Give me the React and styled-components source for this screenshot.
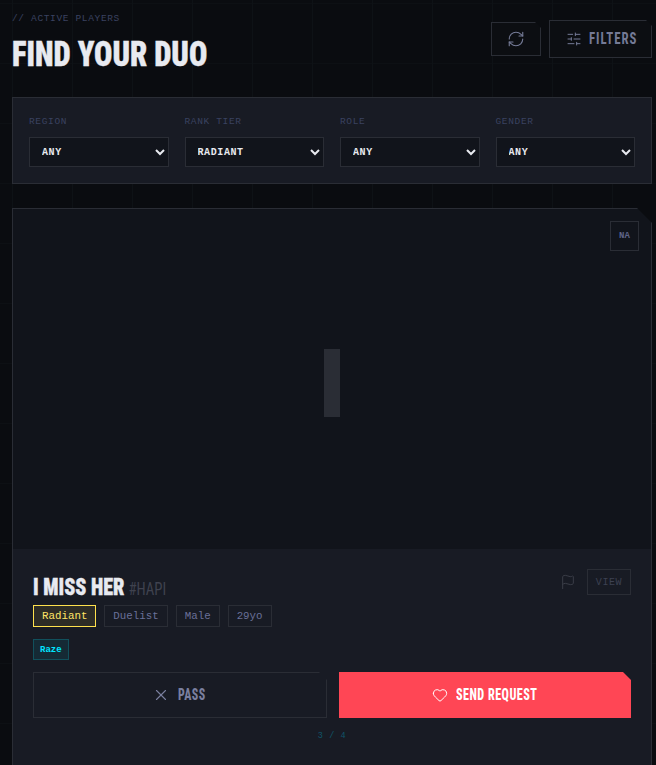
import React from 'react';
import styled, { createGlobalStyle } from 'styled-components';
import { RefreshCw, SlidersHorizontal, Flag, X, Heart } from 'lucide-react';

const display = `"Roboto", "Liberation Sans", sans-serif`;
const mono = `"Liberation Mono", "DejaVu Sans Mono", monospace`;

const Global = createGlobalStyle`
  html, body { margin: 0; height: 765px; overflow: hidden; background: #0a0c10; }
  * { box-sizing: border-box; }
`;

const Page = styled.div`
  height: 765px;
  overflow: hidden;
  padding: 12px 4px 0 12px;
  background-color: #0a0c10;
  background-image:
    linear-gradient(to right, #0e1216 1px, transparent 1px),
    linear-gradient(to bottom, #0d1014 1px, transparent 1px);
  background-size: 60px 60px;
  background-position: 12px 3px;
`;

const Header = styled.header`
  display: flex;
  justify-content: space-between;
  align-items: flex-start;
  height: 61px;
  margin-bottom: 24px;
`;

const Eyebrow = styled.div`
  font: 9.5px/13px ${mono};
  letter-spacing: 0.65px;
  color: #3a4260;
  white-space: pre;
`;

const Title = styled.h1`
  margin: 10px 0 0;
  font-family: ${display};
  font-weight: 900;
  font-stretch: 75%;
  font-size: 35px;
  line-height: 40px;
  color: #e8eaf0;
  white-space: nowrap;
  -webkit-text-stroke: 0.4px #e8eaf0;
  transform: scaleX(0.87);
  transform-origin: 0 50%;
`;

const HeaderActions = styled.div`
  display: flex;
  align-items: center;
  gap: 8px;
  margin-top: 8px;
`;

const GhostButton = styled.button`
  display: flex;
  align-items: center;
  justify-content: center;
  gap: 7px;
  width: ${p => p.$w}px;
  height: ${p => p.$h}px;
  padding: 0 0 1px;
  background: #0c0e12;
  border: 1px solid #2a2d35;
  clip-path: polygon(0 0, calc(100% - 6px) 0, 100% 6px, 100% 100%, 0 100%);
  color: #747a96;
  font-family: ${display};
  font-weight: 700;
  font-stretch: 75%;
  font-size: 16px;
  letter-spacing: 1.2px;
`;

const Squeezed = styled.span`
  display: inline-block;
  width: ${p => p.$w}px;
  white-space: nowrap;
  transform: scaleX(${p => p.$s});
  transform-origin: 0 50%;
`;

const FilterPanel = styled.section`
  display: grid;
  grid-template-columns: repeat(4, 1fr);
  gap: 16px;
  height: 87px;
  padding: 16px;
  background: #181b24;
  border: 1px solid #2a2d35;
`;

const Field = styled.label`
  display: flex;
  flex-direction: column;
  gap: 7px;
`;

const FieldLabel = styled.span`
  font: 9.5px/16px ${mono};
  letter-spacing: 0.65px;
  color: #3a4260;
`;

const Select = styled.select`
  width: 100%;
  height: 30px;
  padding: 0 8px;
  background: #11141b;
  border: 1px solid #2a2d35;
  border-radius: 0;
  color: #e8eaf0;
  font: 700 10px ${mono};
  letter-spacing: 0.6px;
  outline: none;
`;

const Card = styled.article`
  position: relative;
  margin-top: 24px;
  height: 600px;
  background: #11141b;
  border: 1px solid #2a2d35;
  clip-path: polygon(0 0, calc(100% - 15px) 0, 100% 15px, 100% 100%, 0 100%);
`;

const Hero = styled.div`
  display: flex;
  align-items: center;
  justify-content: center;
  height: 340px;
`;

const Initial = styled.div`
  width: 16px;
  height: 68px;
  margin-top: 8px;
  background: #2a2d35;
`;

const RegionBadge = styled.div`
  position: absolute;
  top: 12px;
  right: 12px;
  width: 29px;
  height: 30px;
  display: flex;
  align-items: center;
  justify-content: center;
  border: 1px solid #2a2d35;
  color: #5f6488;
  font: 700 9px ${mono};
`;

const Info = styled.div`
  height: 258px;
  padding: 20px;
  background: #181b24;
`;

const NameRow = styled.div`
  display: flex;
  justify-content: space-between;
  align-items: flex-start;
  height: 36px;
`;

const Name = styled.h2`
  margin: 4px 0 0;
  font-family: ${display};
  font-weight: 900;
  font-stretch: 75%;
  font-size: 24.5px;
  line-height: 28px;
  color: #e8eaf0;
  display: flex;
  align-items: baseline;
  gap: 5px;
  white-space: nowrap;
  transform: scaleX(0.82);
  transform-origin: 0 50%;
`;

const NameText = styled.span`
  -webkit-text-stroke: 0.4px #e8eaf0;
`;

const Tag = styled.span`
  font-weight: 400;
  font-size: 18px;
  color: #3f424f;
`;

const NameActions = styled.div`
  display: flex;
  align-items: center;
  gap: 11px;
  color: #3a3d47;
`;

const ViewButton = styled.button`
  width: 44px;
  height: 26px;
  padding: 0;
  background: transparent;
  border: 1px solid #2a2d35;
  color: #3d4152;
  font: 10px ${mono};
  letter-spacing: 0.6px;
`;

const ChipRow = styled.div`
  display: flex;
  gap: 8px;
  margin-bottom: ${p => p.$mb}px;
`;

const Chip = styled.span`
  height: 22px;
  padding: 0 8px;
  display: flex;
  align-items: center;
  border: 1px solid ${p => (p.$gold ? '#ffe14d' : '#2a2d35')};
  background: ${p => (p.$gold ? '#2d2c26' : 'transparent')};
  color: ${p => (p.$gold ? '#ffe566' : '#6a7098')};
  font: 10.8px ${mono};
`;

const AgentChip = styled.span`
  height: 21px;
  padding: 0 6px;
  display: flex;
  align-items: center;
  border: 1px solid #11505c;
  background: #152a35;
  color: #00e5ff;
  font: 700 9px ${mono};
`;

const Actions = styled.div`
  display: grid;
  grid-template-columns: 294px 292px;
  gap: 12px;
`;

const ActionButton = styled.button`
  display: flex;
  align-items: center;
  justify-content: center;
  gap: 8px;
  height: 46px;
  padding: 0 0 1px;
  clip-path: polygon(0 0, calc(100% - 8px) 0, 100% 8px, 100% 100%, 0 100%);
  background: ${p => (p.$primary ? '#ff4655' : 'transparent')};
  border: ${p => (p.$primary ? 'none' : '1px solid #2a2d35')};
  color: ${p => (p.$primary ? '#ffffff' : '#7a7f9f')};
  font-family: ${display};
  font-weight: 800;
  font-stretch: 75%;
  font-size: 16px;
  letter-spacing: 0.6px;
`;

const Counter = styled.div`
  margin-top: 12px;
  text-align: center;
  font: 8.5px/12px ${mono};
  letter-spacing: 0.6px;
  color: #105468;
`;

const filters = [
  ['REGION', 'ANY'],
  ['RANK TIER', 'RADIANT'],
  ['ROLE', 'ANY'],
  ['GENDER', 'ANY'],
];

export default function App() {
  return (
    <>
      <Global />
      <Page>
        <Header>
          <div>
            <Eyebrow>// ACTIVE PLAYERS</Eyebrow>
            <Title>FIND YOUR DUO</Title>
          </div>
          <HeaderActions>
            <GhostButton $w={50} $h={34}><RefreshCw size={18} strokeWidth={1.5} /></GhostButton>
            <GhostButton $w={103} $h={38}>
              <SlidersHorizontal size={16} strokeWidth={1.5} />
              <Squeezed $w={47} $s={0.8}>FILTERS</Squeezed>
            </GhostButton>
          </HeaderActions>
        </Header>
        <FilterPanel>
          {filters.map(([label, value]) => (
            <Field key={label}>
              <FieldLabel>{label}</FieldLabel>
              <Select defaultValue={value}><option>{value}</option></Select>
            </Field>
          ))}
        </FilterPanel>
        <Card>
          <Hero><Initial /></Hero>
          <RegionBadge>NA</RegionBadge>
          <Info>
            <NameRow>
              <Name><NameText>I MISS HER</NameText><Tag>#HAPI</Tag></Name>
              <NameActions>
                <Flag size={16} strokeWidth={1.5} />
                <ViewButton>VIEW</ViewButton>
              </NameActions>
            </NameRow>
            <ChipRow $mb={12}>
              <Chip $gold>Radiant</Chip>
              <Chip>Duelist</Chip>
              <Chip>Male</Chip>
              <Chip>29yo</Chip>
            </ChipRow>
            <ChipRow $mb={12}><AgentChip>Raze</AgentChip></ChipRow>
            <Actions>
              <ActionButton>
                <X size={18} strokeWidth={1.5} />
                <Squeezed $w={30} $s={0.74}>PASS</Squeezed>
              </ActionButton>
              <ActionButton $primary>
                <Heart size={16} strokeWidth={1.5} />
                <Squeezed $w={83} $s={0.76}>SEND REQUEST</Squeezed>
              </ActionButton>
            </Actions>
            <Counter>3 / 4</Counter>
          </Info>
        </Card>
      </Page>
    </>
  );
}
